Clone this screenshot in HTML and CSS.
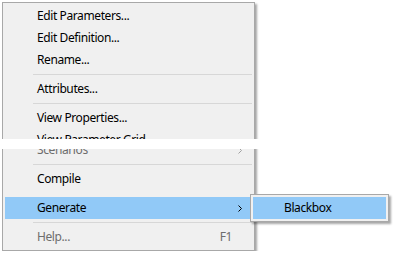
FILE: index.html
```html
<!DOCTYPE html>
<html lang="en">

<head>
    <meta charset="UTF-8">
    <title>Context menu</title>
    <link rel="stylesheet" href="styles.css">
</head>

<body>
    <div class="menu">
        <div class="item">Edit Parameters...</div>
        <div class="item">Edit Definition...</div>
        <div class="item">Rename...</div>
        <div class="separator"></div>
        <div class="item">Attributes...</div>
        <div class="separator"></div>
        <div class="item">View Properties...</div>
        <div class="item cut-top">View Parameter Grid...</div>
        <div class="glitch"></div>
        <div class="cut-bottom">
            <div class="item disabled">
                <span class="label">Scenarios</span>
                <svg class="arrow" width="5" height="7" viewBox="0 0 5 7"><path d="M0.5 0.5 L3.5 3.5 L0.5 6.5" fill="none" stroke="#a0a0a0" stroke-width="1" /></svg>
            </div>
        </div>
        <div class="separator"></div>
        <div class="item">Compile</div>
        <div class="spacer"></div>
        <div class="item active">
            <span class="label">Generate</span>
            <svg class="arrow" width="5" height="7" viewBox="0 0 5 7"><path d="M0.5 0.5 L3.5 3.5 L0.5 6.5" fill="none" stroke="#000" stroke-width="1" /></svg>
            <div class="submenu">
                <div class="item active">Blackbox</div>
            </div>
        </div>
        <div class="separator"></div>
        <div class="item disabled">
            <span class="label">Help...</span>
            <span class="key">F1</span>
        </div>
    </div>
</body>

</html>
```

FILE: styles.css
```css
body {
    margin: 0;
    background-color: #ffffff;
    font-family: "Noto Sans", "Open Sans", sans-serif;
    font-size: 12px;
    letter-spacing: -0.4px;
    color: #000;
}

.menu {
    position: relative;
    width: 247px;
    margin: 2px 0 0 2px;
    padding: 2px;
    background-color: #f0f0f0;
    border: 1px solid #a8a8a8;
    box-shadow: 2px 2px 2px rgba(0, 0, 0, 0.35);
}

.item {
    position: relative;
    display: flex;
    align-items: center;
    height: 22px;
    line-height: 22px;
    padding: 0 9px 0 32px;
    white-space: nowrap;
}

.item .label {
    flex: 1;
}

.item.active {
    background-color: #91c9f7;
}

.item.disabled {
    color: #6d6d6d;
}

.key {
    margin-right: 11px;
}

.separator {
    height: 1px;
    margin: 3px 0 3px 28px;
    background-color: #d7d7d7;
}

.spacer {
    height: 7px;
}

.cut-top {
    height: 10px;
    overflow: hidden;
    align-items: flex-start;
}

.glitch {
    position: relative;
    height: 10px;
    margin: 0 -10px 0 -6px;
    background-color: #ffffff;
}

.cut-bottom {
    height: 12px;
    overflow: hidden;
}

.cut-bottom .item {
    margin-top: -10px;
}

.submenu {
    position: absolute;
    top: -3px;
    left: 245px;
    width: 133px;
    padding: 2px;
    background-color: #f0f0f0;
    border: 1px solid #a8a8a8;
    box-shadow: 2px 2px 2px rgba(0, 0, 0, 0.35);
}

.submenu .item {
    padding-left: 31px;
}
```
